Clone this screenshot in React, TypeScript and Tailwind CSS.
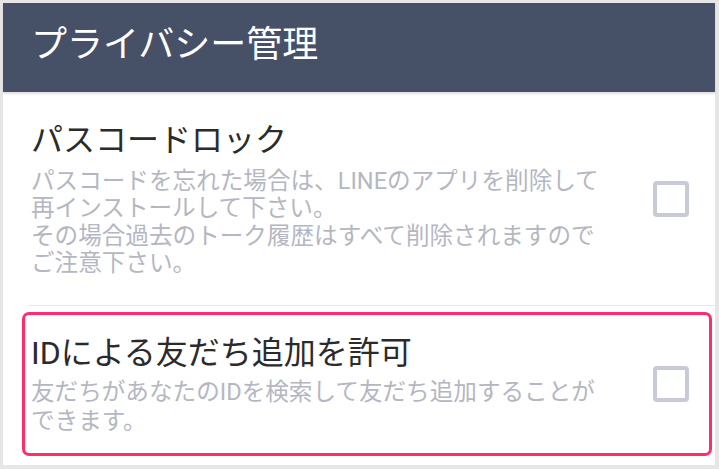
import React, { useState } from 'react';

const jp = { fontFamily: 'Roboto, "Noto Sans CJK JP", sans-serif' };

const Checkbox: React.FC<{ checked: boolean; onToggle: () => void }> = ({ checked, onToggle }) => (
  <button
    onClick={onToggle}
    className="w-[36px] h-[36px] rounded-[4px] border-[4px] border-[#c9cad8] bg-white flex items-center justify-center shrink-0"
  >
    {checked && (
      <svg width="22" height="22" viewBox="0 0 24 24" fill="none" stroke="#00b900" strokeWidth="3">
        <path d="M4 12l5 5L20 6" />
      </svg>
    )}
  </button>
);

const App: React.FC = () => {
  const [passcode, setPasscode] = useState(false);
  const [allowId, setAllowId] = useState(false);

  return (
    <div className="w-[719px] h-[469px] bg-[#e6e6e6] pt-[3px] pl-[3px] pr-[4px] pb-[4px]" style={jp}>
      <div className="h-full bg-white flex flex-col">
        <div className="h-[89px] bg-[#465067] flex items-center pl-[28px] shadow-[0_2px_2px_rgba(0,0,0,0.12)] relative">
          <h1 className="text-[36px] text-white leading-none pb-[6px]">プライバシー管理</h1>
        </div>

        <div className="h-[213px] flex items-center pl-[28px] pr-[26px]">
          <div className="flex-1">
            <div className="text-[32px] leading-[40px] text-[#2b2b2b]">パスコードロック</div>
            <p className="mt-[8px] text-[23.6px] leading-[27.5px] text-[#b4b7c2] whitespace-nowrap">
              パスコードを忘れた場合は、LINEのアプリを削除して
              <br />
              再インストールして下さい。
              <br />
              その場合過去のトーク履歴はすべて削除されますので
              <br />
              ご注意下さい。
            </p>
          </div>
          <Checkbox checked={passcode} onToggle={() => setPasscode(!passcode)} />
        </div>

        <div className="ml-[26px] h-px bg-[#e8e8e8]" />

        <div className="mt-[6px] ml-[19px] mr-[3px] h-[144px] border-[3px] border-[#ff2d6b] rounded-[7px] flex items-center pl-[6px] pr-[20px]">
          <div className="flex-1">
            <div className="text-[32px] leading-[40px] text-[#2b2b2b]">IDによる友だち追加を許可</div>
            <p className="mt-[5px] text-[23.6px] leading-[29px] text-[#b4b7c2] whitespace-nowrap">
              友だちがあなたのIDを検索して友だち追加することが
              <br />
              できます。
            </p>
          </div>
          <Checkbox checked={allowId} onToggle={() => setAllowId(!allowId)} />
        </div>
      </div>
    </div>
  );
};

export default App;
